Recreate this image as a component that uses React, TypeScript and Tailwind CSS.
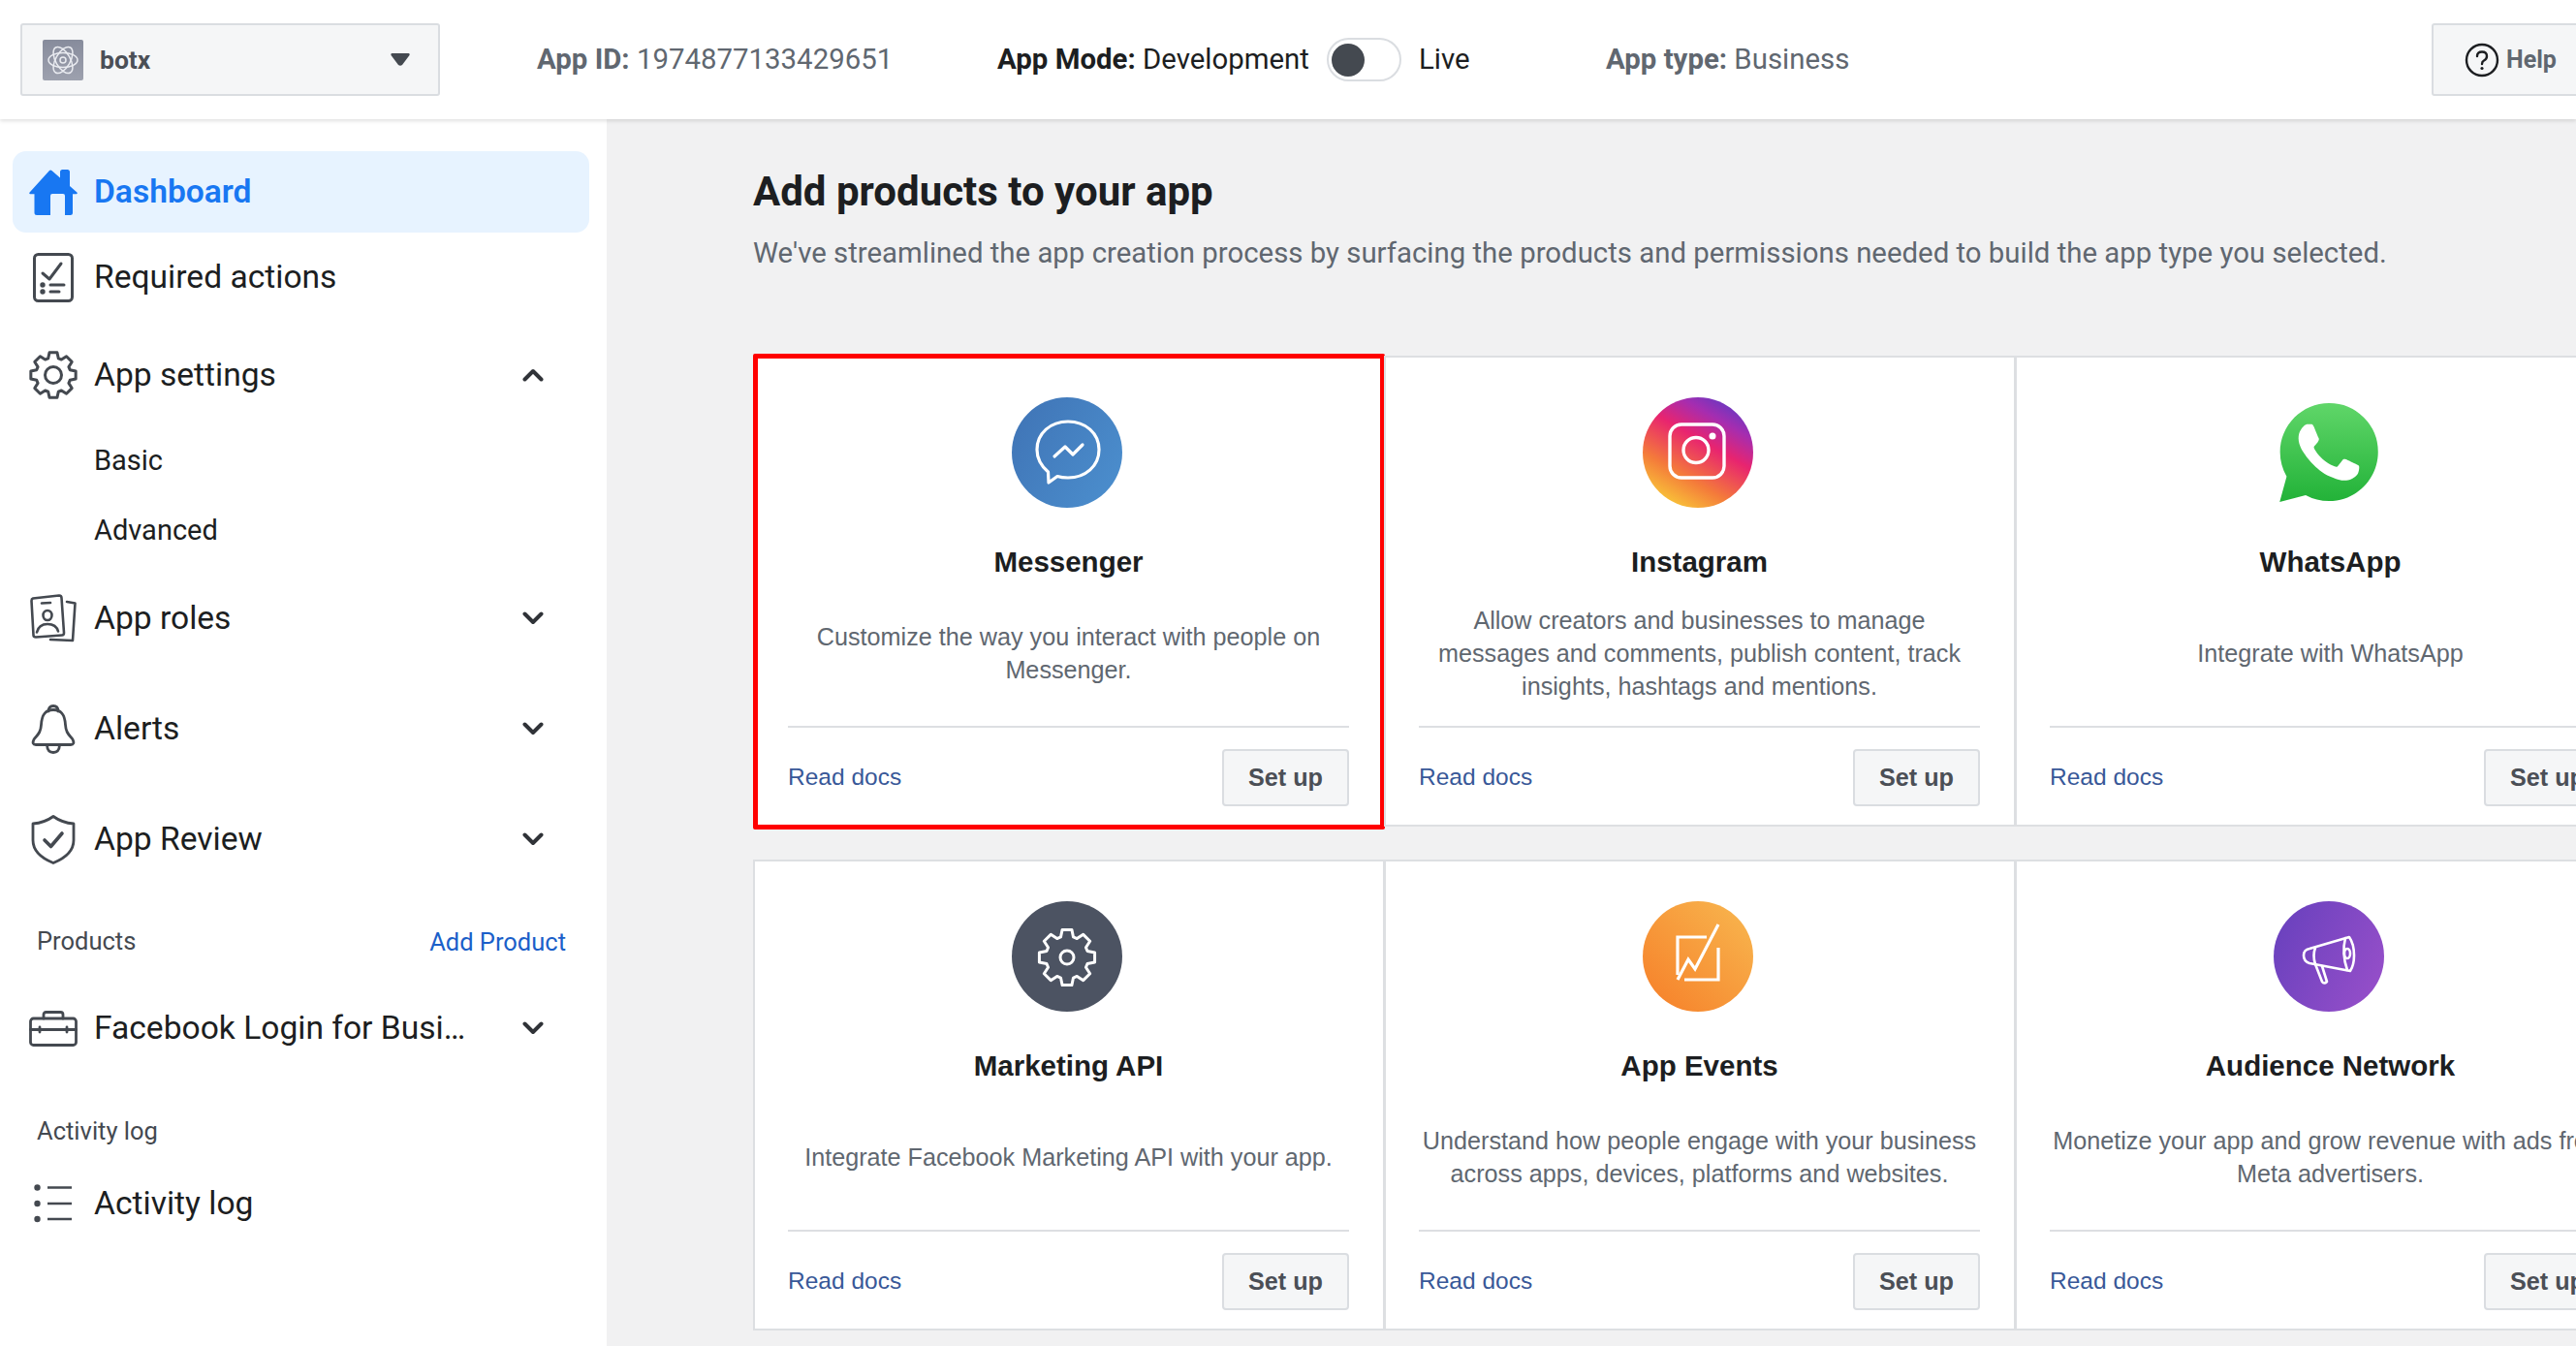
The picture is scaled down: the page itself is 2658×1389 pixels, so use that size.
import React from "react";

const ink = "#444950";

function gearPath(cx: number, cy: number, r1: number, r2: number) {
  let d = "";
  for (let i = 0; i < 8; i++) {
    const a = -Math.PI / 2 + (i * Math.PI) / 4;
    const pts = [
      [r1, a - 0.3],
      [r2, a - 0.17],
      [r2, a + 0.17],
      [r1, a + 0.3],
    ];
    pts.forEach(([r, t], j) => {
      const x = (cx + r * Math.cos(t)).toFixed(2);
      const y = (cy + r * Math.sin(t)).toFixed(2);
      d += `${i === 0 && j === 0 ? "M" : "L"}${x} ${y} `;
    });
  }
  return d + "Z";
}

function HomeIcon() {
  return (
    <svg width="50" height="47" viewBox="0 0 50 47" className="shrink-0">
      <path
        fill="#1877f2"
        fillRule="evenodd"
        d="M23.4 1 L32 8.6 V2.5 Q32 0 34.5 0 H39.5 Q42 0 42 2.5 V17 L49.4 23.4 Q50.4 24.6 49 25.2 L45 25.2 V44.5 Q45 47 42.5 47 H37 V27 Q37 25 35 25 H24 Q22 25 22 27 V47 H8 Q5.5 47 5.5 44.5 V25.2 L1 25.2 Q-0.4 24.6 0.6 23.4 L21 1 Q22.2 0 23.4 1 Z"
      />
    </svg>
  );
}

function RequiredIcon() {
  return (
    <svg width="42" height="51" viewBox="0 0 42 51" fill="none" stroke={ink} strokeWidth="3" strokeLinecap="round" strokeLinejoin="round" className="shrink-0">
      <rect x="1.5" y="1.5" width="39" height="48" rx="4" />
      <path d="M10 21 L17 27 L29 11" />
      <path d="M18 33 H32 M18 40 H27" />
      <circle cx="10" cy="33" r="1.2" fill={ink} />
      <circle cx="10" cy="40" r="1.2" fill={ink} />
    </svg>
  );
}

function GearIcon() {
  return (
    <svg width="50" height="50" viewBox="0 0 50 50" fill="none" stroke={ink} strokeWidth="3" strokeLinejoin="round" className="shrink-0">
      <path d={gearPath(25, 25, 18, 23.5)} />
      <circle cx="25" cy="25" r="8.5" />
    </svg>
  );
}

function RolesIcon() {
  return (
    <svg width="48" height="50" viewBox="0 0 48 50" fill="none" stroke={ink} strokeWidth="2.6" strokeLinecap="round" strokeLinejoin="round" className="shrink-0">
      <path d="M3 4.5 L30 1.5 Q32.5 1.5 32.5 4 L35 40 Q35 42.5 33 42.5 L6 44.5 Q3.5 44.5 3.5 42.5 L1.5 7 Q1.5 5 3 4.5 Z" />
      <path d="M38 8 L46.5 9.5 L44 48 L21 47" />
      <path d="M12 9.5 L21 9" />
      <ellipse cx="18" cy="22" rx="4.5" ry="5" />
      <path d="M7 39.5 Q9 31 18 31 Q27 31 29 38.5" />
    </svg>
  );
}

function BellIcon() {
  return (
    <svg width="46" height="51" viewBox="0 0 46 51" fill="none" stroke={ink} strokeWidth="2.8" strokeLinecap="round" strokeLinejoin="round" className="shrink-0">
      <path d="M18 7 Q18 1.5 23 1.5 Q28 1.5 28 7" />
      <path d="M23 5.5 C13 5.5 11 13 10.5 21 C10 29 7 31 3 36 Q0.5 41.5 5 41.5 H41 Q45.5 41.5 43 36 C39 31 36 29 35.5 21 C35 13 33 5.5 23 5.5 Z" />
      <path d="M16.5 42 Q17 49.5 23 49.5 Q29 49.5 29.5 42" />
    </svg>
  );
}

function ShieldIcon() {
  return (
    <svg width="46" height="51" viewBox="0 0 46 51" fill="none" stroke={ink} strokeWidth="2.8" strokeLinecap="round" strokeLinejoin="round" className="shrink-0">
      <path d="M23 1.5 Q32 8 44 9 V26 Q44 41 23 49.5 Q2 41 2 26 V9 Q14 8 23 1.5 Z" />
      <path d="M14 26 L20.5 32.5 L32 19" strokeWidth="3.6" />
    </svg>
  );
}

function BriefcaseIcon() {
  return (
    <svg width="50" height="37" viewBox="0 0 50 37" fill="none" stroke={ink} strokeWidth="2.8" strokeLinecap="round" strokeLinejoin="round" className="shrink-0">
      <rect x="1.5" y="8" width="47" height="27.5" rx="3" />
      <path d="M15 8 V4 Q15 1.5 17.5 1.5 H32.5 Q35 1.5 35 4 V8" />
      <path d="M1.5 19.5 H48.5 M11 17 V22 M39 17 V22" />
    </svg>
  );
}

function ListIcon() {
  return (
    <svg width="40" height="40" viewBox="0 0 40 40" className="shrink-0">
      <g fill={ink}>
        <circle cx="3.5" cy="3.5" r="3.2" />
        <circle cx="3.5" cy="20" r="3.2" />
        <circle cx="3.5" cy="36" r="3.2" />
      </g>
      <path d="M14 3.5 H39 M14 20 H39 M14 36 H39" stroke={ink} strokeWidth="2.6" />
    </svg>
  );
}

function Chevron({ up }: { up?: boolean }) {
  return (
    <svg width="22" height="14" viewBox="0 0 22 14" fill="none" stroke="#303338" strokeWidth="4" strokeLinecap="round" strokeLinejoin="round">
      <path d={up ? "M2.5 11.5 L11 3 L19.5 11.5" : "M2.5 2.5 L11 11 L19.5 2.5"} />
    </svg>
  );
}

function NavRow({ icon, label, open, chevron = true }: { icon: React.ReactNode; label: string; open?: boolean; chevron?: boolean }) {
  return (
    <div className="flex h-[72px] items-center">
      <div className="flex w-[97px] shrink-0 justify-center pl-[13px]">{icon}</div>
      <span className="w-[400px] truncate text-[33.6px] text-[#1c1e21]">{label}</span>
      {chevron && (
        <div className="ml-[42px]">
          <Chevron up={open} />
        </div>
      )}
    </div>
  );
}

function MessengerLogo() {
  return (
    <svg viewBox="0 0 114 114" className="h-full w-full" fill="none" stroke="#fff" strokeWidth="3.2" strokeLinecap="round" strokeLinejoin="round">
      <path d="M58 25 C76 25 90 37 90 54 C90 71 76 83 58 83 C54 83 50 82.500 47 81.500 L38 88 L37.500 77 C30.500 71 26 63 26 54 C26 37 40 25 58 25 Z" />
      <path d="M44 61 L55 51 L63 59 L73 49" />
    </svg>
  );
}

function InstagramLogo() {
  return (
    <svg viewBox="0 0 114 114" className="h-full w-full" fill="none" stroke="#fff" strokeWidth="3.4">
      <rect x="28" y="28" width="56" height="55" rx="12" />
      <circle cx="55" cy="54.500" r="13" />
      <circle cx="72" cy="40" r="3.5" fill="#fff" stroke="none" />
    </svg>
  );
}

function WhatsappLogo() {
  return (
    <svg viewBox="0 0 24 24" className="h-full w-full">
      <defs>
        <linearGradient id="wa" x1="0" y1="0" x2="0" y2="1">
          <stop offset="0" stopColor="#60d669" />
          <stop offset="1" stopColor="#22b238" />
        </linearGradient>
      </defs>
      <path
        fill="url(#wa)"
        d="M12.05 0C5.495 0 .16 5.335.157 11.892c0 2.096.547 4.142 1.588 5.945L.057 24l6.305-1.654a11.88 11.88 0 005.683 1.448h.005c6.554 0 11.89-5.335 11.893-11.893a11.821 11.821 0 00-3.48-8.413A11.821 11.821 0 0012.05 0z"
      />
      <path
        fill="#fff"
        transform="translate(12 12) scale(1.22) translate(-12.05 -12.05)"
        d="M17.472 14.382c-.297-.149-1.758-.867-2.03-.967-.273-.099-.471-.148-.67.15-.197.297-.767.966-.94 1.164-.173.199-.347.223-.644.075-.297-.15-1.255-.463-2.39-1.475-.883-.788-1.48-1.761-1.653-2.059-.173-.297-.018-.458.13-.606.134-.133.298-.347.446-.52.149-.174.198-.298.298-.497.099-.198.05-.371-.025-.52-.075-.149-.669-1.612-.916-2.207-.242-.579-.487-.5-.669-.51-.173-.008-.371-.01-.57-.01-.198 0-.52.074-.792.372-.272.297-1.04 1.016-1.04 2.479 0 1.462 1.065 2.875 1.213 3.074.149.198 2.096 3.2 5.077 4.487.709.306 1.262.489 1.694.625.712.227 1.36.195 1.871.118.571-.085 1.758-.719 2.006-1.413.248-.694.248-1.289.173-1.413-.074-.124-.272-.198-.57-.347z"
      />
    </svg>
  );
}

function MarketingLogo() {
  return (
    <svg viewBox="0 0 114 114" className="h-full w-full" fill="none" stroke="#fff" strokeWidth="3" strokeLinejoin="round">
      <path d={gearPath(57, 58, 22, 29)} />
      <circle cx="57" cy="58" r="7" />
    </svg>
  );
}

function EventsLogo() {
  return (
    <svg viewBox="0 0 114 114" className="h-full w-full" fill="none" stroke="#fff" strokeWidth="3.2">
      <path d="M66 37 H36 V76" />
      <path d="M36 81 L47 60 L54 70 L78 24" />
      <path d="M43 81 H78 V48" />
    </svg>
  );
}

function AudienceLogo() {
  return (
    <svg viewBox="0 0 114 114" className="h-full w-full" fill="none" stroke="#fff" strokeWidth="2.6" strokeLinecap="round" strokeLinejoin="round">
      <path d="M37 49 L78 37 Q83 44 83 56 Q83 66 79 72 L37 64 Q31 62 31 56 Q31 50 37 49 Z" />
      <path d="M43 48 Q40 56 43 65" />
      <path d="M43 65 L50 83 Q52 86 55 83 L50 67" />
      <path d="M74 38 Q70 54 76 71" />
      <ellipse cx="76" cy="54" rx="3" ry="5" />
    </svg>
  );
}

const products = [
  {
    name: "Messenger",
    desc: "Customize the way you interact with people on Messenger.",
    bg: "bg-[linear-gradient(120deg,#3f73b5,#4c90cf)]",
    logo: <MessengerLogo />,
  },
  {
    name: "Instagram",
    desc: "Allow creators and businesses to manage messages and comments, publish content, track insights, hashtags and mentions.",
    bg: "bg-[linear-gradient(30deg,#f9c838_10%,#f47b3a_32%,#e8246f_58%,#a52db0_76%,#4f3cc8_95%)]",
    logo: <InstagramLogo />,
  },
  {
    name: "WhatsApp",
    desc: "Integrate with WhatsApp",
    bg: "",
    logo: <WhatsappLogo />,
  },
  {
    name: "Marketing API",
    desc: "Integrate Facebook Marketing API with your app.",
    bg: "bg-[#4c5362]",
    logo: <MarketingLogo />,
  },
  {
    name: "App Events",
    desc: "Understand how people engage with your business across apps, devices, platforms and websites.",
    bg: "bg-[linear-gradient(45deg,#f67e28,#f8b850)]",
    logo: <EventsLogo />,
  },
  {
    name: "Audience Network",
    desc: "Monetize your app and grow revenue with ads from Meta advertisers.",
    bg: "bg-[linear-gradient(115deg,#6640bd,#9a50ca)]",
    logo: <AudienceLogo />,
  },
];

function ProductCard({ name, desc, bg, logo, highlighted }: { name: string; desc: string; bg: string; logo: React.ReactNode; highlighted?: boolean }) {
  return (
    <div className="relative flex h-[486px] w-[652px] flex-col border-2 border-[#dddfe2] bg-white pl-[34px] pr-[35px] pt-[41px] [font-family:'Liberation_Sans',Arial,sans-serif]">
      <div className="flex justify-center pr-[4px]">
        {name === "WhatsApp" ? (
          <div className="my-[6px] h-[102px] w-[102px]">{logo}</div>
        ) : (
          <div className={`h-[114px] w-[114px] overflow-hidden rounded-full ${bg}`}>{logo}</div>
        )}
      </div>
      <h3 className="mt-[39px] text-center text-[29.5px] leading-[34px] font-bold text-[#1c1e21]">{name}</h3>
      <div className="mt-[26px] flex h-[102px] items-center justify-center text-center text-[25.2px] leading-[34px] text-[#606770]">
        <p>{desc}</p>
      </div>
      <div className="mt-[24px] h-[2px] bg-[#dddfe2]" />
      <div className="mt-[22px] flex items-center justify-between">
        <a className="text-[24.5px] text-[#385898]">Read docs</a>
        <button className="h-[59px] w-[131px] rounded-[4px] border-2 border-[#dadde1] bg-[#f5f6f7] text-[25.2px] font-bold text-[#4b4f56]">Set up</button>
      </div>
      {highlighted && <div className="pointer-events-none absolute -top-[4px] -right-[2px] -bottom-[5px] -left-[2px] rounded-[2px] border-[5px] border-[#ff0000]" />}
    </div>
  );
}

export default function App() {
  return (
    <div className="flex h-[1389px] w-[2658px] flex-col overflow-hidden bg-white [font-family:Roboto,sans-serif]">
      <header className="relative z-10 flex h-[123px] shrink-0 items-center overflow-hidden bg-white text-[29.4px] shadow-[0_2px_4px_rgba(0,0,0,0.12)]">
        <div className="ml-[21px] flex h-[75px] w-[433px] shrink-0 items-center rounded-[3px] border-2 border-[#dadde1] bg-[#f5f6f7] pl-[21px]">
          <div className="flex h-[42px] w-[42px] items-center justify-center rounded-[2px] bg-[linear-gradient(#878c9c,#9da1ae)]">
            <svg width="34" height="38" viewBox="0 0 34 38" fill="none" stroke="#e9ebf0" strokeWidth="1.5">
              <ellipse cx="17" cy="19" rx="15" ry="7.5" />
              <ellipse cx="17" cy="19" rx="15" ry="7.5" transform="rotate(60 17 19)" />
              <ellipse cx="17" cy="19" rx="15" ry="7.5" transform="rotate(120 17 19)" />
              <circle cx="17" cy="19" r="3" />
            </svg>
          </div>
          <span className="ml-[17px] text-[26.5px] font-bold text-[#4b4f56]">botx</span>
          <svg width="20" height="13" viewBox="0 0 20 13" className="ml-auto mr-[29px]">
            <path d="M1.500 0 H18.500 Q20 0 19.500 2 L12 12 Q10 13.500 8 12 L0.500 2 Q0 0 1.500 0 Z" fill="#444950" />
          </svg>
        </div>
        <div className="ml-[100px] w-[475px] shrink-0 whitespace-nowrap text-[#606770]">
          <b className="font-bold text-[#606770]">App ID:</b> 1974877133429651
        </div>
        <div className="w-[322px] shrink-0 whitespace-nowrap text-[#1c1e21]">
          <b className="font-bold">App Mode:</b> Development
        </div>
        <div className="ml-[18px] flex h-[45px] w-[77px] shrink-0 items-center rounded-full border-2 border-[#dadde1] bg-white pl-[3px]">
          <div className="h-[34px] w-[34px] rounded-full bg-[#444950]" />
        </div>
        <span className="ml-[18px] w-[193px] shrink-0 text-[#1c1e21]">Live</span>
        <div className="w-[852px] shrink-0 whitespace-nowrap text-[#606770]">
          <b className="font-bold">App type:</b> Business
        </div>
        <div className="flex h-[75px] w-[170px] shrink-0 items-center rounded-[3px] border-2 border-[#dadde1] bg-[#f5f6f7] pl-[32px]">
          <svg width="36" height="36" viewBox="0 0 36 36" fill="none" stroke="#1c1e21" strokeWidth="2.4">
            <circle cx="18" cy="18" r="16" />
            <path d="M13 14 Q13 9.500 18 9.500 Q23 9.500 23 14 Q23 17 20 18.500 Q18 19.500 18 22" strokeLinecap="round" />
            <circle cx="18" cy="26.500" r="1.600" fill="#1c1e21" stroke="none" />
          </svg>
          <span className="ml-[7px] text-[25px] font-bold text-[#606770]">Help</span>
        </div>
      </header>
      <div className="flex min-h-0 flex-1">
        <aside className="w-[626px] shrink-0 bg-white pt-[33px]">
          <div className="ml-[13px] mr-[18px] flex h-[84px] items-center rounded-[14px] bg-[#e7f3ff] pl-[17px]">
            <HomeIcon />
            <span className="ml-[17px] text-[33.6px] leading-[40px] font-semibold text-[#1877f2]">Dashboard</span>
          </div>
          <div className="mt-[10px]">
            <NavRow icon={<RequiredIcon />} label="Required actions" chevron={false} />
          </div>
          <div className="mt-[29px]">
            <NavRow icon={<GearIcon />} label="App settings" open />
          </div>
          <div className="mt-[29px] flex h-[48px] items-center pl-[97px] text-[29px] text-[#1c1e21]">Basic</div>
          <div className="mt-[24px] flex h-[48px] items-center pl-[97px] text-[29px] text-[#1c1e21]">Advanced</div>
          <div className="mt-[30px]">
            <NavRow icon={<RolesIcon />} label="App roles" />
          </div>
          <div className="mt-[42px]">
            <NavRow icon={<BellIcon />} label="Alerts" />
          </div>
          <div className="mt-[42px]">
            <NavRow icon={<ShieldIcon />} label="App Review" />
          </div>
          <div className="mt-[49px] flex h-[40px] items-center justify-between pl-[38px] pr-[42px] text-[25.5px]">
            <span className="text-[#444950]">Products</span>
            <a className="mt-[2px] text-[#1b5fc9]">Add Product</a>
          </div>
          <div className="mt-[34px]">
            <NavRow icon={<BriefcaseIcon />} label="Facebook Login for Business" />
          </div>
          <div className="mt-[50px] flex h-[40px] items-center pl-[38px] text-[25.5px] text-[#444950]">Activity log</div>
          <div className="mt-[19px]">
            <NavRow icon={<ListIcon />} label="Activity log" chevron={false} />
          </div>
        </aside>
        <main className="min-w-0 flex-1 overflow-hidden bg-[#f1f1f2] pl-[151px]">
          <h1 className="mt-[48px] text-[42px] leading-[54px] font-bold text-[#1c1e21]">Add products to your app</h1>
          <p className="mt-[16px] whitespace-nowrap text-[29.38px] leading-[40px] text-[#606770]">
            We've streamlined the app creation process by surfacing the products and permissions needed to build the app type you selected.
          </p>
          <div className="mt-[86px] grid w-[1953px] grid-cols-[651px_651px_651px] gap-y-[34px]">
            {products.map((p, i) => (
              <ProductCard key={p.name} {...p} highlighted={i === 0} />
            ))}
          </div>
        </main>
      </div>
    </div>
  );
}
